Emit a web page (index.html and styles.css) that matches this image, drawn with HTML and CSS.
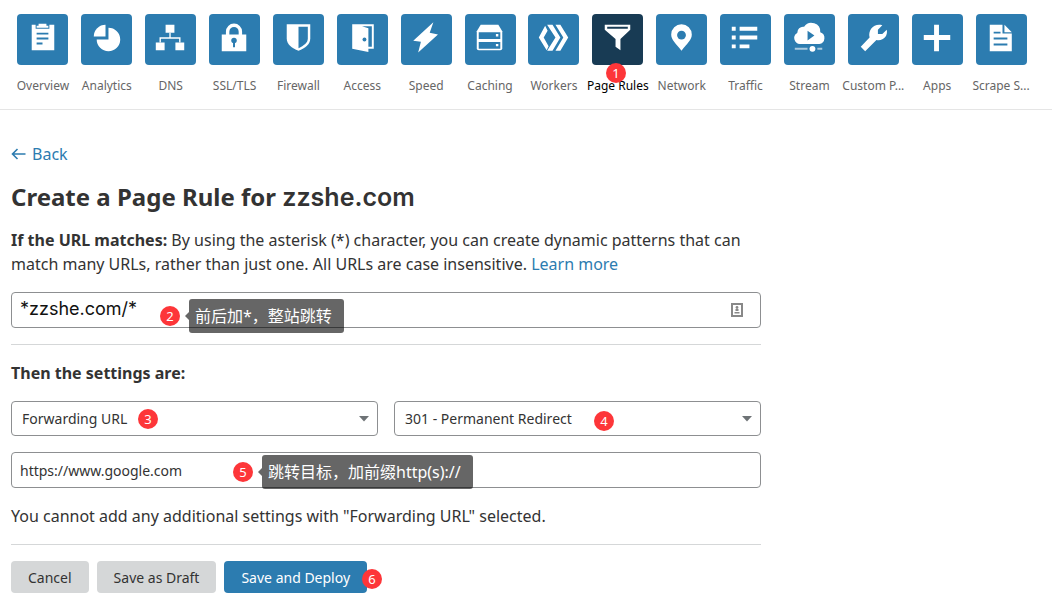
FILE: index.html
```html
<!doctype html>
<html lang="en">
<head>
	<meta charset="utf-8">
	<meta name="viewport" content="width=device-width, initial-scale=1">
	<title>Page Rules</title>
	<link rel="stylesheet" href="styles.css">
</head>
<body>

<header>
	<nav class="apps">
		<a href="#overview" class="app">
			<svg class="tile" viewBox="0 0 52 52"><path d="M15 11h4v4h14v-4h5v26H15z"/><path d="M20 12h2v-2h8v2h2v2H20z"/><path class="cut" d="M20 19h12v2H20zM20 24h12v2H20zM20 29h6v2h-6z"/></svg>
			<span>Overview</span>
		</a>
		<a href="#analytics" class="app">
			<svg class="tile" viewBox="0 0 52 52"><path d="M16 26h12V14a12 12 0 1 1-12 12z"/><path d="M13 23a12 12 0 0 1 12-12v12z"/></svg>
			<span>Analytics</span>
		</a>
		<a href="#dns" class="app">
			<svg class="tile" viewBox="0 0 52 52"><path d="M21 11h9v8h-9zM11 29h9v8h-9zM31 29h9v8h-9z"/><path class="line" stroke-width="1.4" d="M25.5 19v6M15.5 29v-4.5h20V29"/></svg>
			<span>DNS</span>
		</a>
		<a href="#ssl" class="app">
			<svg class="tile" viewBox="0 0 52 52"><path d="M13 21h25v17H13z"/><path class="line" stroke-width="3.5" d="M19 22v-4a6.5 6.5 0 0 1 13 0v4"/><circle class="cut" cx="25.5" cy="27" r="2.8"/><path class="cut" d="M24.5 28h2v6h-2z"/></svg>
			<span>SSL/TLS</span>
		</a>
		<a href="#firewall" class="app">
			<svg class="tile" viewBox="0 0 52 52"><path d="M14 10.5h24V25c0 6-5 9.5-12 12.5-7-3-12-6.5-12-12.5z"/><path class="cut" d="M26 13h9.5v12c0 4.500-4 7.200-9.500 9.800z"/></svg>
			<span>Firewall</span>
		</a>
		<a href="#access" class="app">
			<svg class="tile" viewBox="0 0 52 52"><path d="M15.5 10.5h22v25H32v-2h3.5v-21h-10l6.500 2v24.200l-16.500-3.200z"/><circle class="cut" cx="28" cy="26" r="2"/></svg>
			<span>Access</span>
		</a>
		<a href="#speed" class="app">
			<svg class="tile" viewBox="0 0 52 52"><path d="M33 8.5 29.300 19l8.400 2-20.200 18.300 2.800-11-7.800-1z"/></svg>
			<span>Speed</span>
		</a>
		<a href="#caching" class="app">
			<svg class="tile" viewBox="0 0 52 52"><path d="M16 11h18l4 6.5V35a2 2 0 0 1-2 2H14a2 2 0 0 1-2-2V17.5z"/><path class="cut" d="M14 18.5h22v7H14zM14 28.5h22v7H14z"/><path d="M31.5 20.5H34V23h-2.500zM31.500 30.500H34V33h-2.500z"/></svg>
			<span>Caching</span>
		</a>
		<a href="#workers" class="app">
			<svg class="tile" viewBox="0 0 52 52"><path d="M17.5 12 20 17l-4 7 5 9-2 4L11 24z"/><path d="M19.5 11H25l8 13-8 13.5h-5.500L28 24z"/><path d="M28 11h5l8 13-8 13.500h-5L36 24z"/></svg>
			<span>Workers</span>
		</a>
		<a href="#page-rules" class="app active">
			<svg class="tile" viewBox="0 0 52 52"><path d="M13 11h26v5l-10 9.5V37l-5-3.500v-8L13 16z"/><path class="cut" d="M15.5 13h21v2h-21z"/></svg>
			<span>Page Rules</span>
			<b class="step step-1">1</b>
		</a>
		<a href="#network" class="app">
			<svg class="tile" viewBox="0 0 52 52"><path d="M26 37.5C20 30 15.5 26.5 15.5 21a10.500 10.500 0 0 1 21 0C36.500 26.500 32 30 26 37.500z"/><circle class="cut" cx="26" cy="21.5" r="4.5"/></svg>
			<span>Network</span>
		</a>
		<a href="#traffic" class="app">
			<svg class="tile" viewBox="0 0 52 52"><path d="M12 13h4v4h-4zM20 13h18v4H20zM12 22h4v4h-4zM20 22h18v4H20zM12 31h4v4h-4zM20 31h10v4H20z"/></svg>
			<span>Traffic</span>
		</a>
		<a href="#stream" class="app">
			<svg class="tile" viewBox="0 0 52 52"><path d="M17 30.5a6 6 0 0 1-3.500-11.200 6 6 0 0 1 7-6.300 9 9 0 0 1 16.500 5.500 6.200 6.200 0 0 1-1 12z"/><path class="cut" d="M24 17v10l7-5z"/><path class="soft" d="M11 34.5h13v2H11zM34 34.5h5v2h-5z"/><circle cx="29" cy="35.5" r="3"/></svg>
			<span>Stream</span>
		</a>
		<a href="#custom-pages" class="app">
			<svg class="tile" viewBox="0 0 52 52"><path d="M35 11.5 30.500 16v4.500H35l4.500-4.500c1.500 6-3.500 12-10.500 10.500L17.500 38 13 33.500 22 24c-2-8 5-15 13-12.500z"/></svg>
			<span>Custom P...</span>
		</a>
		<a href="#apps" class="app">
			<svg class="tile" viewBox="0 0 52 52"><path d="M22.5 11h5v10.500H39v5H27.500V38h-5V26.500H12v-5h10.500z"/></svg>
			<span>Apps</span>
		</a>
		<a href="#scrape-shield" class="app">
			<svg class="tile" viewBox="0 0 52 52"><path d="M14 11h13v9h9.500v18H14z"/><path d="M29 11l7.500 7.500H29z"/><path class="cut" d="M18 18h7v2h-7zM18 24h14v2H18zM18 30h14v2H18z"/></svg>
			<span>Scrape S...</span>
		</a>
	</nav>
</header>

<main>
	<a href="#back" class="back">
		<svg width="15" height="12" viewBox="0 0 15 12"><path d="M14.5 6h-13M6.500 1l-5 5 5 5"/></svg>
		Back
	</a>
	<h1>Create a Page Rule for <span class="domain">zzshe.com</span></h1>

	<form action="#">
		<p><label for="url"><strong>If the URL matches:</strong></label> By using the asterisk (*) character, you can create dynamic patterns that can match many URLs, rather than just one. All URLs are case insensitive. <a href="#learn">Learn more</a></p>

		<div class="field">
			<input type="text" id="url" class="pattern" value="*zzshe.com/*">
			<svg class="autofill" width="12" height="14" viewBox="0 0 12 14"><path class="frame" d="M1 1h10v12H1z"/><circle cx="6" cy="4.5" r="1.4"/><path d="M4.5 6h3v2h-3zM3.5 9h5v1.500h-5z"/></svg>
			<div class="note note-2"><b class="step">2</b><span class="tip" lang="zh">前后加*，整站跳转</span></div>
		</div>

		<hr>
		<h2>Then the settings are:</h2>

		<div class="row">
			<div class="field">
				<select aria-label="Setting"><option>Forwarding URL</option></select>
				<svg class="caret" width="10" height="6" viewBox="0 0 10 6"><path d="M0 0h10L5 5.500z"/></svg>
				<b class="step step-3">3</b>
			</div>
			<div class="field">
				<select aria-label="Status code"><option>301 - Permanent Redirect</option></select>
				<svg class="caret" width="10" height="6" viewBox="0 0 10 6"><path d="M0 0h10L5 5.500z"/></svg>
				<b class="step step-4">4</b>
			</div>
		</div>

		<div class="field">
			<input type="text" aria-label="Destination URL" value="https://www.google.com">
			<div class="note note-5"><b class="step">5</b><span class="tip" lang="zh">跳转目标，加前缀http(s)://</span></div>
		</div>

		<p>You cannot add any additional settings with "Forwarding URL" selected.</p>
		<hr>

		<div class="actions">
			<button type="button">Cancel</button>
			<button type="button">Save as Draft</button>
			<button type="submit" class="primary">Save and Deploy<b class="step step-6">6</b></button>
		</div>
	</form>
</main>

</body>
</html>
```
FILE: styles.css
```css
*{
	box-sizing: border-box;
}
body{
	margin: 0;
	background: #fff;
	color: #333;
	font-family: "Noto Sans", "Noto Sans CJK SC", sans-serif;
	font-size: 16px;
	line-height: 24px;
}
a{
	color: #2c7cb0;
	text-decoration: none;
}

/* top navigation */
header{
	padding: 14px 19px 11px 11px;
	border-bottom: 1px solid #e5e5e5;
}
.apps{
	display: grid;
	grid-template-columns: repeat(16, minmax(0, 1fr));
}
.app{
	position: relative;
	display: flex;
	flex-direction: column;
	align-items: center;
	gap: 9px;
	color: #666;
	font-size: 12px;
	white-space: nowrap;
}
.tile{
	width: 51px;
	height: 51px;
	border-radius: 4px;
	background: #2c7cb0;
	fill: #fff;
}
.tile .cut{
	fill: #2c7cb0;
}
.tile .line{
	fill: none;
	stroke: #fff;
}
.tile .soft{
	opacity: .6;
}
.active{
	color: #000;
}
.active .tile{
	background: #183b54;
}
.active .cut{
	fill: #183b54;
}

/* page rule form */
main{
	max-width: 772px;
	padding: 32px 11px 14px;
}
.back{
	display: inline-flex;
	align-items: center;
	gap: 6px;
}
.back svg{
	fill: none;
	stroke: #2c7cb0;
	stroke-width: 1.6;
}
h1{
	margin: 16px 0;
	font-size: 24px;
	line-height: 30px;
}
.domain{
	font-family: Inter, sans-serif;
	font-size: 25px;
	font-weight: 600;
}
h2{
	margin: 16px 0;
	font-size: 16px;
	line-height: 24px;
}
p{
	margin: 16px 0;
}
hr{
	margin: 16px 0;
	border: 0;
	border-top: 1px solid #d5d7d8;
}
.field{
	position: relative;
}
input, select{
	display: block;
	width: 100%;
	height: 36px;
	padding: 0 8px;
	border: 1px solid #8d8f91;
	border-radius: 4px;
	background: #fff;
	color: #333;
	font-family: inherit;
	font-size: 14px;
}
select{
	height: 35px;
	padding: 0 10px;
	appearance: none;
}
.pattern{
	padding-bottom: 4px;
	font-family: Inter, sans-serif;
	font-size: 18px;
	color: #111;
}
.row{
	display: grid;
	grid-template-columns: 1fr 1fr;
	gap: 16px;
	margin-bottom: 16px;
}
.caret{
	position: absolute;
	right: 9px;
	top: 15px;
	fill: #6e7376;
}
.autofill{
	position: absolute;
	right: 18px;
	top: 11px;
	fill: #888;
}
.autofill .frame{
	fill: none;
	stroke: #888;
	stroke-width: 2;
}
.actions{
	display: flex;
	gap: 8px;
}
button{
	position: relative;
	height: 32px;
	padding: 0 17px;
	border: 0;
	border-radius: 4px;
	background: #d5d7d8;
	color: #333;
	font-family: inherit;
	font-size: 14px;
}
.primary{
	background: #2c7cb0;
	color: #fff;
}

/* numbered steps and their notes */
.step{
	display: block;
	width: 20px;
	height: 20px;
	border-radius: 50%;
	background: #fd3639;
	color: #fff;
	font-size: 13px;
	font-weight: 400;
	line-height: 20px;
	text-align: center;
}
.step-1, .step-3, .step-4, .step-6{
	position: absolute;
}
.step-1{
	left: 20px;
	top: 49px;
}
.step-3{
	left: 127px;
	top: 8px;
}
.step-4{
	left: 200px;
	top: 10px;
}
.step-6{
	right: -15px;
	top: 8px;
}
.note{
	position: absolute;
	top: 7px;
	display: flex;
	align-items: center;
	gap: 9px;
}
.note-2{
	left: 149px;
}
.note-5{
	left: 222px;
	top: 3px;
}
.tip{
	position: relative;
	height: 34px;
	padding: 0 12px 0 6px;
	border-radius: 3px;
	background: rgba(0,0,0,.6);
	color: #fff;
	line-height: 34px;
	white-space: nowrap;
}
.tip::before{
	content: "";
	position: absolute;
	left: -4px;
	top: 13px;
	border: solid transparent;
	border-width: 4px 4px 4px 0;
	border-right-color: rgba(0,0,0,.6);
}
```
